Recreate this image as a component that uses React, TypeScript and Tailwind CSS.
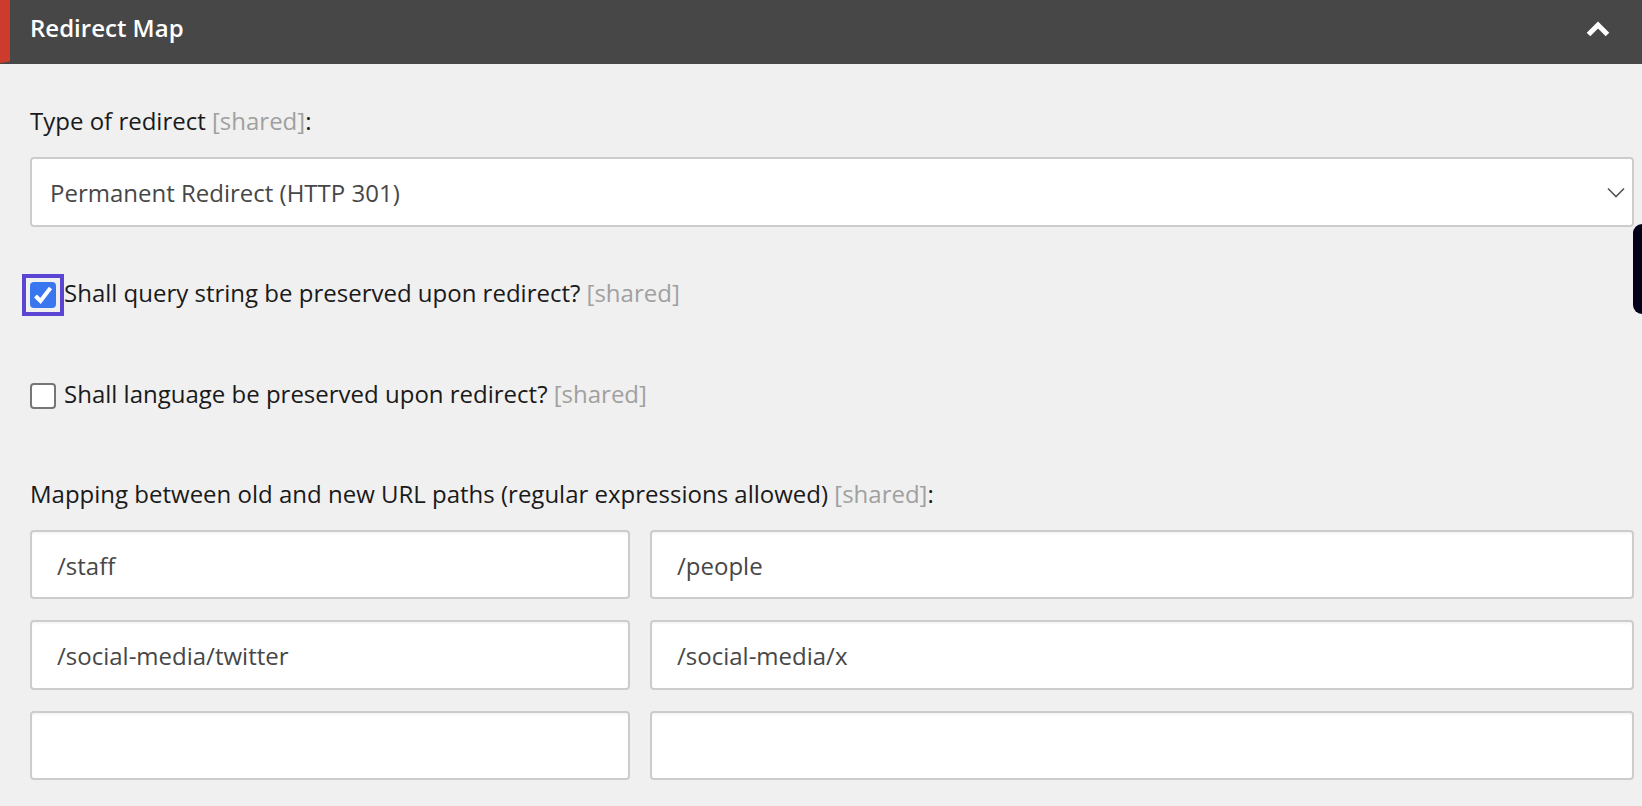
import React from "react";

const fieldClass =
  "h-full rounded-[4px] border-2 border-[#cccccc] bg-white pl-[25px] pt-[2px] flex items-center text-[#474747] shadow-[inset_0_2px_2px_rgba(0,0,0,0.04)]";

function Shared() {
  return <span className="text-[#a0a0a0]">[shared]</span>;
}

function MapField({ value }: { value?: string }) {
  return <div className={fieldClass}>{value}</div>;
}

export default function App() {
  return (
    <div className="relative h-[806px] w-[1642px] overflow-hidden bg-[#f0f0f0] font-['Open_Sans',sans-serif] text-[24px] text-[#1a1a1a]">
      {/* Section header */}
      <div className="flex h-16 items-center justify-between bg-[#474747] pr-[32px]">
        <div className="flex h-full items-center">
          <div className="h-full w-[10px] bg-[#cc3b2c] [clip-path:polygon(0_0,100%_0,100%_96%,0_99%)]" />
          <div className="-mt-[8px] pl-[20px] font-semibold text-white">Redirect Map</div>
        </div>
        <svg width="24" height="16" viewBox="0 0 24 16" fill="none" className="-mt-[6px] blur-[0.4px]">
          <path d="M2.5 13.5 L12 4 L21.5 13.5" stroke="#ffffff" strokeWidth="5" strokeLinejoin="miter" />
        </svg>
      </div>

      <div className="pl-[30px] pr-[8px]">
        <div className="mt-[41px] flex h-8 items-center">
          Type of redirect&nbsp;<Shared />:
        </div>

        <div className="mt-[20px] flex h-[70px] items-center justify-between rounded-[4px] border-2 border-[#cccccc] bg-white pl-[18px] pr-[7px] text-[#474747]">
          <span className="pt-[2px]">Permanent Redirect (HTTP 301)</span>
          <svg width="18" height="11" viewBox="0 0 18 11" fill="none">
            <path d="M1 1.5 L9 9.5 L17 1.5" stroke="#555555" strokeWidth="1.6" />
          </svg>
        </div>

        {/* Checkboxes */}
        <div className="mt-[47px] flex h-[42px] items-center">
          <div className="-ml-[8px] flex h-[42px] w-[42px] shrink-0 items-center justify-center border-4 border-[#5a46d2]">
            <div className="flex h-[26px] w-[26px] items-center justify-center rounded-[4px] bg-[#3a76f0]">
              <svg width="20" height="18" viewBox="0 0 20 18" fill="none">
                <path d="M2.5 10 L7.5 15 L17.5 2" stroke="#ffffff" strokeWidth="4" />
              </svg>
            </div>
          </div>
          <span className="-mt-[5px]">
            Shall query string be preserved upon redirect? <Shared />
          </span>
        </div>

        <div className="mt-[67px] flex h-[26px] items-center">
          <div className="h-[26px] w-[26px] shrink-0 rounded-[4px] border-2 border-[#767676] bg-white" />
          <span className="ml-[8px] -mt-[5px]">
            Shall language be preserved upon redirect? <Shared />
          </span>
        </div>

        {/* Mapping table */}
        <div className="mt-[69px] flex h-8 items-center">
          Mapping between old and new URL paths (regular expressions allowed)&nbsp;<Shared />:
        </div>

        <div className="mt-[20px] grid grid-cols-[600px_1fr] grid-rows-[69px_70px_69px] gap-x-[20px] gap-y-[21px]">
          <MapField value="/staff" />
          <MapField value="/people" />
          <MapField value="/social-media/twitter" />
          <MapField value="/social-media/x" />
          <MapField />
          <MapField />
        </div>
      </div>

      {/* Widget tab poking in from the right edge */}
      <div className="absolute right-0 top-[224px] h-[90px] w-[9px] rounded-l-[10px] bg-[#02021a]" />
    </div>
  );
}
